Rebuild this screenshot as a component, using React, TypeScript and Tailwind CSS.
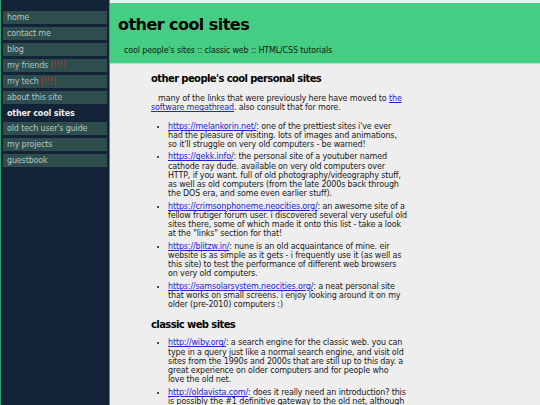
const nav = [
  { label: "home" },
  { label: "contact me" },
  { label: "blog" },
  { label: "my friends", alert: true },
  { label: "my tech", alert: true },
  { label: "about this site" },
  { label: "other cool sites", current: true },
  { label: "old tech user's guide" },
  { label: "my projects" },
  { label: "guestbook" },
];

const personal = [
  {
    url: "https://melankorin.net/",
    text: ": one of the prettiest sites i've ever had the pleasure of visiting. lots of images and animations, so it'll struggle on very old computers - be warned!",
  },
  {
    url: "https://gekk.info/",
    text: ": the personal site of a youtuber named cathode ray dude. available on very old computers over HTTP, if you want. full of old photography/videography stuff, as well as old computers (from the late 2000s back through the DOS era, and some even earlier stuff).",
  },
  {
    url: "https://crimsonphoneme.neocities.org/",
    text: ': an awesome site of a fellow frutiger forum user. i discovered several very useful old sites there, some of which made it onto this list - take a look at the "links" section for that!',
  },
  {
    url: "https://blitzw.in/",
    text: ": nune is an old acquaintance of mine. eir website is as simple as it gets - i frequently use it (as well as this site) to test the performance of different web browsers on very old computers.",
  },
  {
    url: "https://samsolarsystem.neocities.org/",
    text: ": a neat personal site that works on small screens. i enjoy looking around it on my older (pre-2010) computers :)",
  },
];

const classic = [
  {
    url: "http://wiby.org/",
    text: ": a search engine for the classic web. you can type in a query just like a normal search engine, and visit old sites from the 1990s and 2000s that are still up to this day. a great experience on older computers and for people who love the old net.",
  },
  {
    url: "http://oldavista.com/",
    text: ": does it really need an introduction? this is possibly the #1 definitive gateway to the old net, although it is not maintained anymore, so some of the links may be dead.",
  },
];

function LinkList({ items }: { items: { url: string; text: string }[] }) {
  return (
    <ul className="list-disc pl-[17px] space-y-[3px] marker:text-[7px]">
      {items.map((it) => (
        <li key={it.url}>
          <a href="#" className="text-[#2323d6] underline">
            {it.url}
          </a>
          {it.text}
        </li>
      ))}
    </ul>
  );
}

export default function App() {
  return (
    <div
      className="flex h-[405px] overflow-hidden bg-[#eeeeee] text-[#1a1a1a] tracking-[-0.15px]"
      style={{ fontFamily: '"DejaVu Sans", Verdana, sans-serif' }}
    >
      <aside className="w-[110px] shrink-0 bg-[#132439] border-x border-[#3c9a72] pt-[11px] pl-[2px] pr-[2px]">
        <nav className="flex flex-col gap-[3px] text-[8px] leading-[13px]">
          {nav.map((n) =>
            n.current ? (
              <div key={n.label} className="h-[12px] pl-[4px] font-bold text-[#f0f0f0]">
                {n.label}
              </div>
            ) : (
              <a
                key={n.label}
                href="#"
                className="h-[13px] pl-[4px] bg-[#2e4d4d] text-[#b8c4c4]"
              >
                {n.label}
                {n.alert && <span className="text-[#c0302c]"> [!!!]</span>}
              </a>
            )
          )}
        </nav>
      </aside>
      <main className="flex-1 pt-[3px]">
        <header className="h-[61px] bg-[#46cd84] border-b border-[#a8e8c6] pl-[8px] pt-[12px]">
          <h1 className="text-[16px] font-bold leading-[20px] text-black tracking-[-0.55px]">
            other cool sites
          </h1>
          <p className="mt-[10px] pl-[6px] text-[8px] text-[#102010]">
            cool people's sites :: classic web :: HTML/CSS tutorials
          </p>
        </header>
        <section className="pl-[41px] pt-[8px] w-[297px] text-[8px] leading-[9.25px]">
          <h2 className="text-[10px] font-bold leading-[14px] text-black tracking-[-0.6px]">
            other people's cool personal sites
          </h2>
          <p className="mt-[8px] indent-[7px]">
            many of the links that were previously here have moved to{" "}
            <a href="#" className="text-[#2323d6] underline">
              the software megathread
            </a>
            . also consult that for more.
          </p>
          <div className="mt-[9px]">
            <LinkList items={personal} />
          </div>
          <h2 className="mt-[9px] text-[10px] font-bold leading-[14px] text-black tracking-[-0.6px]">
            classic web sites
          </h2>
          <div className="mt-[6px]">
            <LinkList items={classic} />
          </div>
        </section>
      </main>
    </div>
  );
}
